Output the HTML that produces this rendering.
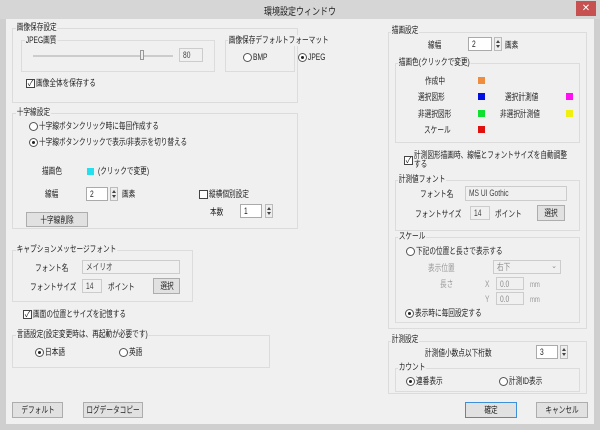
<!DOCTYPE html><html><head><meta charset="utf-8"><style>
*{box-sizing:border-box;margin:0;padding:0}
body{width:600px;height:430px;overflow:hidden;background:#cfcfcf;font-family:"Liberation Sans","Noto Sans CJK JP",sans-serif;font-size:9px;color:#222;position:relative}
.a{position:absolute;white-space:nowrap;line-height:11px;transform:scaleX(.74);transform-origin:0 0}
.t{position:absolute;white-space:nowrap}
.client{position:absolute;left:6px;top:19px;width:588px;height:405px;background:#f0f0f0}
.g{position:absolute;border:1px solid #dcdcdc}
.lbl{position:absolute;background:#f0f0f0;padding:0 1px;line-height:11px;white-space:nowrap;transform:scaleX(.74);transform-origin:0 0}
.tb{position:absolute;background:#fff;border:1px solid #aaa;padding-left:3px;line-height:12px}
.tbd{position:absolute;background:#f0f0f0;border:1px solid #ccc;padding-left:3px;line-height:12px;color:#888;white-space:nowrap}
.tb span,.tbd span.s{display:inline-block;transform:scaleX(.74);transform-origin:0 0}
.btn{position:absolute;background:#e1e1e1;border:1px solid #adadad;line-height:14px;white-space:nowrap}
.btn span{position:absolute;left:50%;top:0;transform:translateX(-50%) scaleX(.74)}
.sp{position:absolute;width:8px;border:1px solid #bbb;background:#eee}
.sp:before{content:"";position:absolute;left:1px;top:2px;border:2.5px solid transparent;border-bottom:3px solid #444;border-top:0}
.sp:after{content:"";position:absolute;left:1px;bottom:2px;border:2.5px solid transparent;border-top:3px solid #444;border-bottom:0}
.r{position:absolute;width:9px;height:9px;border:1px solid #555;border-radius:50%;background:#fff}
.r.on:after{content:"";position:absolute;left:2px;top:2px;width:3px;height:3px;border-radius:50%;background:#222}
.c{position:absolute;width:9px;height:9px;border:1px solid #444;background:#fff;font-size:8px;line-height:7px;text-align:center}
.sq{position:absolute;width:7px;height:7px}
.gray{color:#999}
</style></head><body>
<div class="t" style="left:0;top:0;width:600px;height:19px;background:#d6d6d6"></div>
<div class="t" style="left:0;top:3px;width:600px;text-align:center;font-size:10px"><span style="display:inline-block;transform:scaleX(.8)">環境設定ウィンドウ</span></div>
<div class="t" style="left:576px;top:1px;width:20px;height:15px;background:#c75050;color:#fff;text-align:center;line-height:15px;font-size:10px">✕</div>
<div class="client"></div>

<div class="g" style="left:12px;top:28px;width:286px;height:75px"></div>
<div class="lbl" style="left:16px;top:22px">画像保存設定</div>
<div class="g" style="left:21px;top:40px;width:194px;height:32px"></div>
<div class="lbl" style="left:25px;top:35px">JPEG画質</div>
<div class="t" style="left:33px;top:55px;width:140px;height:2px;background:#ccc"></div>
<div class="t" style="left:140px;top:50px;width:4px;height:10px;background:#eee;border:1px solid #999"></div>
<div class="tbd" style="left:179px;top:48px;width:24px;height:14px;color:#444"><span class="s">80</span></div>
<div class="g" style="left:225px;top:40px;width:70px;height:32px"></div>
<div class="lbl" style="left:228px;top:35px">画像保存デフォルトフォーマット</div>
<div class="r" style="left:243px;top:53px"></div><div class="a" style="left:253px;top:52px">BMP</div>
<div class="r on" style="left:298px;top:53px"></div><div class="a" style="left:308px;top:52px">JPEG</div>
<div class="c" style="left:26px;top:79px">✓</div><div class="a" style="left:36px;top:78px">画像全体を保存する</div>

<div class="g" style="left:12px;top:113px;width:286px;height:116px"></div>
<div class="lbl" style="left:16px;top:107px">十字線設定</div>
<div class="r" style="left:29px;top:122px"></div><div class="a" style="left:39px;top:121px">十字線ボタンクリック時に毎回作成する</div>
<div class="r on" style="left:29px;top:138px"></div><div class="a" style="left:39px;top:137px">十字線ボタンクリックで表示/非表示を切り替える</div>
<div class="a" style="left:42px;top:166px">描画色</div>
<div class="sq" style="left:87px;top:168px;background:#22e0ee"></div>
<div class="a" style="left:98px;top:166px">(クリックで変更)</div>
<div class="a" style="left:45px;top:189px">線幅</div>
<div class="tb" style="left:86px;top:187px;width:22px;height:14px"><span>2</span></div><div class="sp" style="left:110px;top:187px;height:14px"></div>
<div class="a" style="left:122px;top:189px">画素</div>
<div class="c" style="left:199px;top:190px"></div><div class="a" style="left:209px;top:189px">縦横個別設定</div>
<div class="a" style="left:210px;top:207px">本数</div>
<div class="tb" style="left:240px;top:204px;width:22px;height:14px"><span>1</span></div><div class="sp" style="left:265px;top:204px;height:14px"></div>
<div class="btn" style="left:26px;top:212px;width:62px;height:15px"><span>十字線削除</span></div>

<div class="g" style="left:12px;top:250px;width:181px;height:52px"></div>
<div class="lbl" style="left:16px;top:244px">キャプションメッセージフォント</div>
<div class="a" style="left:35px;top:263px">フォント名</div>
<div class="tbd" style="left:82px;top:260px;width:98px;height:14px;color:#444"><span class="s">メイリオ</span></div>
<div class="a" style="left:30px;top:282px">フォントサイズ</div>
<div class="tbd" style="left:82px;top:279px;width:20px;height:14px;color:#444"><span class="s">14</span></div>
<div class="a" style="left:108px;top:282px">ポイント</div>
<div class="btn" style="left:153px;top:278px;width:27px;height:16px"><span>選択</span></div>
<div class="c" style="left:23px;top:310px">✓</div><div class="a" style="left:33px;top:309px">画面の位置とサイズを記憶する</div>

<div class="g" style="left:12px;top:335px;width:258px;height:33px"></div>
<div class="lbl" style="left:16px;top:329px">言語設定(設定変更時は、再起動が必要です)</div>
<div class="r on" style="left:35px;top:348px"></div><div class="a" style="left:45px;top:347px">日本語</div>
<div class="r" style="left:119px;top:348px"></div><div class="a" style="left:129px;top:347px">英語</div>

<div class="btn" style="left:12px;top:402px;width:51px;height:16px"><span>デフォルト</span></div>
<div class="btn" style="left:83px;top:402px;width:60px;height:16px"><span>ログデータコピー</span></div>

<div class="g" style="left:388px;top:32px;width:199px;height:297px"></div>
<div class="lbl" style="left:391px;top:25px">描画設定</div>
<div class="a" style="left:428px;top:40px">線幅</div>
<div class="tb" style="left:468px;top:37px;width:24px;height:14px"><span>2</span></div><div class="sp" style="left:494px;top:37px;height:14px"></div>
<div class="a" style="left:505px;top:40px">画素</div>
<div class="g" style="left:395px;top:63px;width:185px;height:80px"></div>
<div class="lbl" style="left:398px;top:57px">描画色(クリックで変更)</div>
<div class="a" style="left:425px;top:76px">作成中</div><div class="sq" style="left:478px;top:77px;background:#f08c40"></div>
<div class="a" style="left:418px;top:92px">選択図形</div><div class="sq" style="left:478px;top:93px;background:#0010e0"></div>
<div class="a" style="left:505px;top:92px">選択計測値</div><div class="sq" style="left:566px;top:93px;background:#ff10f0"></div>
<div class="a" style="left:418px;top:109px">非選択図形</div><div class="sq" style="left:478px;top:110px;background:#10e030"></div>
<div class="a" style="left:500px;top:109px">非選択計測値</div><div class="sq" style="left:566px;top:110px;background:#f0f010"></div>
<div class="a" style="left:424px;top:125px">スケール</div><div class="sq" style="left:478px;top:126px;background:#e01010"></div>
<div class="c" style="left:404px;top:156px">✓</div>
<div class="a" style="left:414px;top:151px;line-height:9px">計測図形描画時、線幅とフォントサイズを自動調整<br>する</div>
<div class="g" style="left:395px;top:180px;width:185px;height:51px"></div>
<div class="lbl" style="left:398px;top:174px">計測値フォント</div>
<div class="a" style="left:420px;top:189px">フォント名</div>
<div class="tbd" style="left:465px;top:186px;width:102px;height:15px;color:#444"><span class="s">MS UI Gothic</span></div>
<div class="a" style="left:415px;top:209px">フォントサイズ</div>
<div class="tbd" style="left:470px;top:206px;width:20px;height:14px;color:#444"><span class="s">14</span></div>
<div class="a" style="left:495px;top:209px">ポイント</div>
<div class="btn" style="left:537px;top:205px;width:28px;height:16px"><span>選択</span></div>
<div class="g" style="left:395px;top:237px;width:185px;height:86px"></div>
<div class="lbl" style="left:398px;top:231px">スケール</div>
<div class="r" style="left:406px;top:247px"></div><div class="a" style="left:416px;top:246px">下記の位置と長さで表示する</div>
<div class="a gray" style="left:428px;top:263px">表示位置</div>
<div class="tbd" style="left:493px;top:260px;width:68px;height:14px"><span class="s">右下</span><span style="position:absolute;right:3px;font-size:7px">⌄</span></div>
<div class="a gray" style="left:440px;top:279px">長さ</div>
<div class="a gray" style="left:485px;top:279px">X</div><div class="tbd" style="left:496px;top:277px;width:28px;height:13px"><span class="s">0.0</span></div><div class="a gray" style="left:530px;top:279px;font-size:8px">mm</div>
<div class="a gray" style="left:485px;top:294px">Y</div><div class="tbd" style="left:496px;top:292px;width:28px;height:13px"><span class="s">0.0</span></div><div class="a gray" style="left:530px;top:294px;font-size:8px">mm</div>
<div class="r on" style="left:405px;top:309px"></div><div class="a" style="left:415px;top:308px">表示時に毎回設定する</div>

<div class="g" style="left:388px;top:341px;width:199px;height:53px"></div>
<div class="lbl" style="left:391px;top:334px">計測設定</div>
<div class="a" style="left:425px;top:348px">計測値小数点以下桁数</div>
<div class="tb" style="left:536px;top:345px;width:22px;height:14px"><span>3</span></div><div class="sp" style="left:560px;top:345px;height:14px"></div>
<div class="g" style="left:395px;top:368px;width:185px;height:24px"></div>
<div class="lbl" style="left:398px;top:362px">カウント</div>
<div class="r on" style="left:406px;top:377px"></div><div class="a" style="left:416px;top:376px">連番表示</div>
<div class="r" style="left:499px;top:377px"></div><div class="a" style="left:509px;top:376px">計測ID表示</div>

<div class="btn" style="left:465px;top:402px;width:52px;height:16px;border-color:#3c8fd8"><span>確定</span></div>
<div class="btn" style="left:536px;top:402px;width:52px;height:16px"><span>キャンセル</span></div>
</body></html>
